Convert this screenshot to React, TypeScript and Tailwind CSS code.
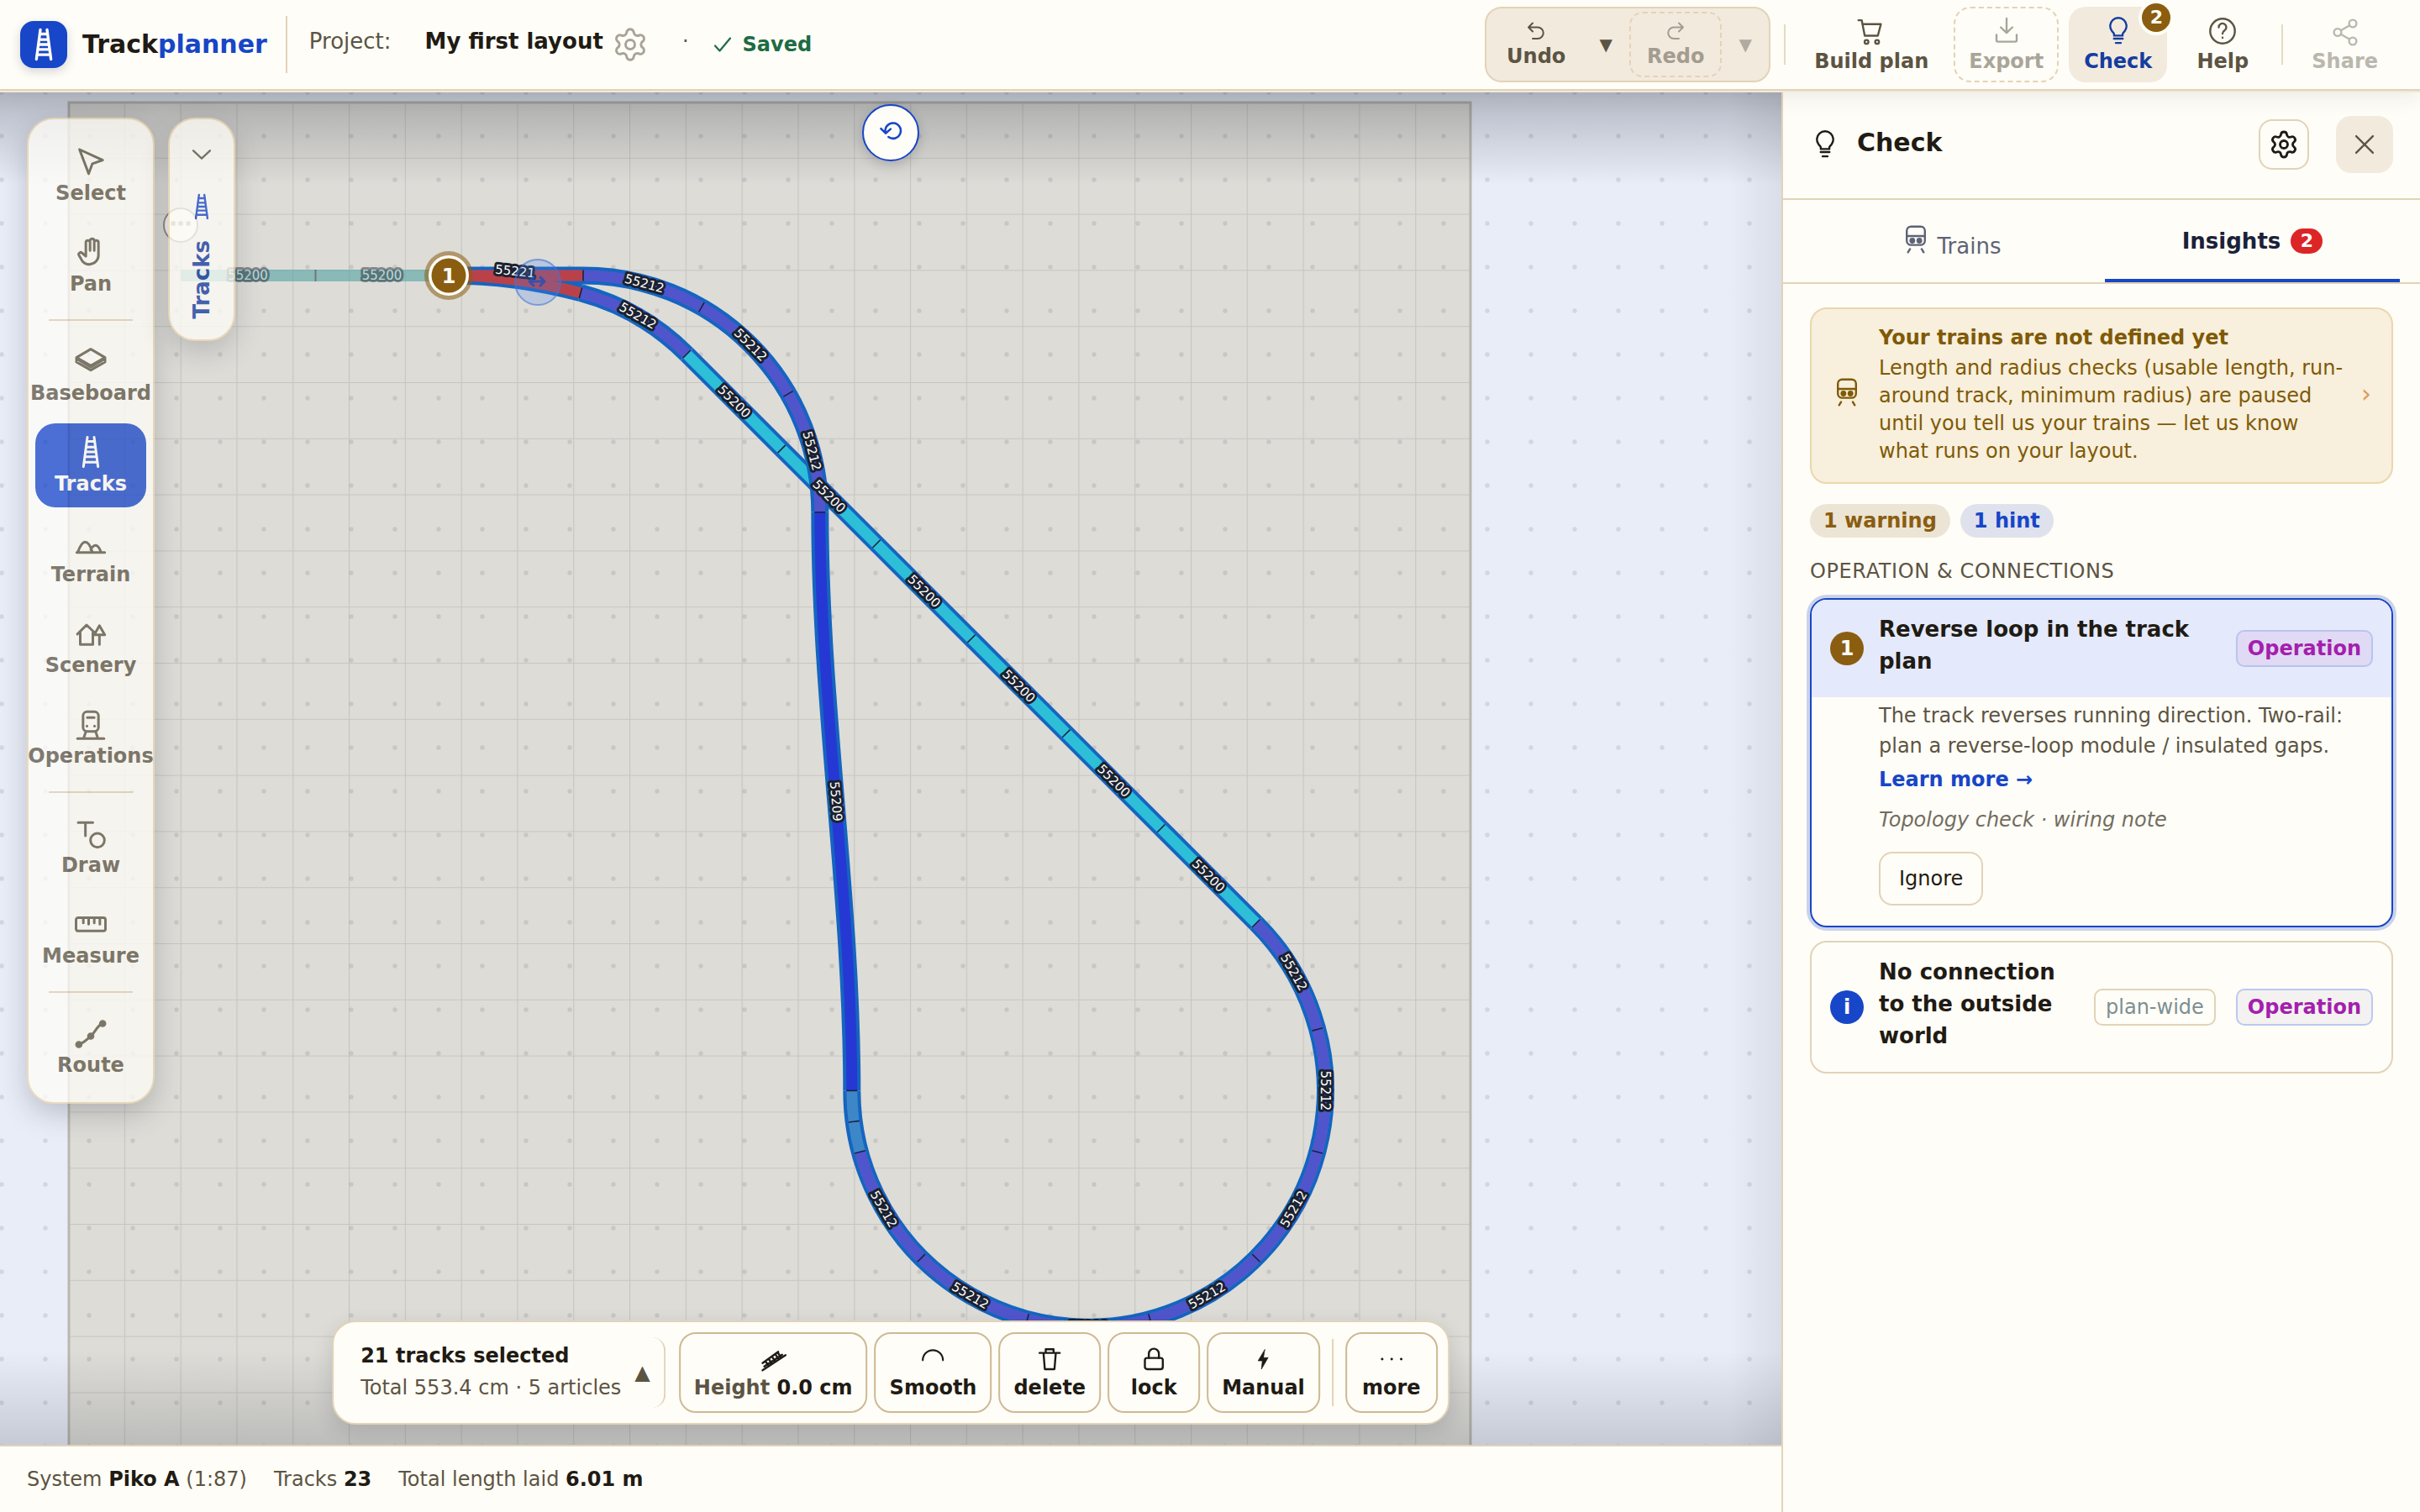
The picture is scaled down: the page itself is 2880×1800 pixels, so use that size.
import type { ReactNode } from "react";
import { Settings } from "lucide-react";

/* ---------- icons ---------- */

type IconProps = { className?: string; width?: number; children: ReactNode };

function Icon({ className = "size-9", width = 1.5, children }: IconProps) {
  return (
    <svg
      viewBox="0 0 24 24"
      className={`${className} shrink-0`}
      fill="none"
      stroke="currentColor"
      strokeWidth={width}
      strokeLinecap="round"
      strokeLinejoin="round"
      aria-hidden="true"
    >
      {children}
    </svg>
  );
}

const rail = (
  <>
    <path d="M9.6 1.5 6.8 22.5M14.4 1.5l2.8 21" />
    <path d="M9.4 4.5h5.2M8.9 8.5h6.2M8.4 12h7.2M8 15.5h8M7.4 19.3h9.2" />
  </>
);

const bulb = (
  <>
    <path d="M8.6 15.6h6.8v-1.2c0-.7 1-1.5 1.7-2.4A6.5 6.5 0 1 0 6.9 12c.7.9 1.7 1.7 1.7 2.4z" />
    <path d="M8.5 18h7M10 21.4h4" />
  </>
);

const train = (
  <>
    <rect x="4.8" y="1.8" width="14.4" height="14.6" rx="3.4" />
    <path d="M4.8 9.3h14.4" />
    <circle cx="9.2" cy="13" r="1.5" fill="currentColor" />
    <circle cx="14.8" cy="13" r="1.5" fill="currentColor" />
    <path d="M7.4 19.6l-1.6 2.6M16.6 19.6l1.6 2.6" />
  </>
);

/* ---------- header ---------- */

type ActionProps = { icon: ReactNode; label: string; className?: string; disabled?: boolean; children?: ReactNode };

function Action({ icon, label, className = "border-transparent", disabled, children }: ActionProps) {
  return (
    <button
      type="button"
      disabled={disabled}
      className={`relative flex h-[90px] flex-col items-center justify-center gap-1 rounded-[20px] border-2 px-4 text-[24px] leading-7 font-bold ${className}`}
    >
      <Icon width={1.6}>{icon}</Icon>
      {label}
      {children}
    </button>
  );
}

function Divider() {
  return <div className="mx-1 h-12 w-0.5 bg-[#e6dac4]" />;
}

function Header() {
  return (
    <header className="relative z-20 flex h-[108px] shrink-0 items-center border-b-2 border-[#e2d3b8] bg-[#fffdf7] px-6 pr-8 shadow-[0_2px_0_#f2e8da,0_8px_24px_rgba(40,35,20,0.08)]">
      <div className="flex items-center gap-[18px]">
        <div className="flex size-14 items-center justify-center rounded-2xl bg-[#1746c8] text-[#fffdf7] shadow-[0_4px_12px_rgba(30,30,60,0.18)]">
          <Icon className="size-10" width={2}>{rail}</Icon>
        </div>
        <h1 className="text-[30px] leading-9 font-bold">
          Track<span className="text-[#1746c8]">planner</span>
        </h1>
      </div>
      <div className="mr-6 ml-[22px] h-[68px] w-0.5 bg-[#e2d3b8]" />
      <div className="flex items-center text-[26px] leading-8">
        <span className="mr-10 ml-0.5 pb-2 text-[#5c5443]">Project:</span>
        <span className="mr-2.5 pb-2 font-bold">My first layout</span>
        <button type="button" aria-label="Project settings" className="text-[#a9a398]">
          <Settings className="size-11" strokeWidth={1.6} />
        </button>
        <span className="mr-7 ml-10 pb-2 text-[24px] text-[#5c5443]">·</span>
        <Icon className="mr-3 size-6 text-[#1d6b45]" width={2.2}>
          <path d="M3 13.5l5.5 6L21 4.5" />
        </Icon>
        <span className="text-[24px] font-bold text-[#1d6b45]">Saved</span>
      </div>
      <div className="ml-auto flex items-center gap-3 text-[#5c5443]">
        <div className="flex h-[90px] items-center gap-1 rounded-[20px] border-2 border-[#e2d3b8] bg-[#f3eade] px-1 text-[24px] leading-7 font-bold">
          <button type="button" className="flex h-[78px] w-[110px] flex-col items-center justify-center gap-1">
            <Icon className="size-6" width={2}>
              <path d="M8 2.5 3 7.5l5 5M3 7.5h11a6.3 6.3 0 0 1 0 13.5H8" />
            </Icon>
            Undo
          </button>
          <button type="button" aria-label="Undo history" className="h-[78px] w-12 text-[20px] font-normal">
            ▼
          </button>
          <button
            type="button"
            disabled
            className="flex h-[78px] w-[110px] flex-col items-center justify-center gap-1 rounded-2xl border-2 border-dashed border-[#e2d3b8] text-[#a39c90]"
          >
            <Icon className="size-6" width={2}>
              <path d="m16 2.5 5 5-5 5M21 7.5H10A6.3 6.3 0 0 0 10 21h6" />
            </Icon>
            Redo
          </button>
          <button type="button" disabled aria-label="Redo history" className="h-[78px] w-12 text-[20px] font-normal text-[#b1aa9e]">
            ▼
          </button>
        </div>
        <Divider />
        <Action
          label="Build plan"
          icon={
            <>
              <path d="M1.8 3.4h2.6l2.4 12.3h10.4l2.4-9.2H5.1" />
              <circle cx="8.2" cy="20.6" r="1.5" />
              <circle cx="16.6" cy="20.6" r="1.5" />
            </>
          }
        />
        <Action
          label="Export"
          disabled
          className="border-dashed border-[#e2d3b8] text-[#a9a59a]"
          icon={<path d="M12 2v11M7.4 9l4.6 4.4L16.6 9M4 15v4.4c0 .6.4 1 1 1h14c.6 0 1-.4 1-1V15" />}
        />
        <Action label="Check" className="border-transparent bg-[#f3eade] text-[#143e9e]" icon={bulb}>
          <span className="absolute -top-2 -right-2 flex h-[38px] w-[38px] items-center justify-center rounded-full border-2 border-[#fffdf7] bg-[#8a5d10] text-[22px] leading-none text-[#fffdf7] ring-2 ring-[#fffdf7]">
            2
          </span>
        </Action>
        <Action
          label="Help"
          className="min-w-[108px] border-transparent"
          icon={
            <>
              <circle cx="12" cy="12" r="9.8" />
              <path d="M9 9a3 3 0 1 1 4.6 2.5c-1 .7-1.6 1.2-1.6 2.5" />
              <path d="M12 17.2v.1" />
            </>
          }
        />
        <Divider />
        <Action
          label="Share"
          disabled
          className="border-transparent text-[#bab7ae]"
          icon={
            <>
              <circle cx="6" cy="13" r="2.9" />
              <circle cx="18" cy="6" r="2.9" />
              <circle cx="18" cy="20" r="2.9" />
              <path d="m8.5 11.5 7-4M8.5 14.5l7 4" />
            </>
          }
        />
      </div>
    </header>
  );
}

/* ---------- track plan ---------- */

const R = 281.8;
const LEN = 112.9;
const START = { x: 817.3, y: 421.6 };
const LOOP = { x: 1295.6, y: 1298.4 };
const TOP = { x: 694, y: 609.8 };

const rad = (d: number) => (d * Math.PI) / 180;
const on = (c: { x: number; y: number }, deg: number) => ({
  x: c.x + R * Math.cos(rad(deg)),
  y: c.y + R * Math.sin(rad(deg)),
});

const OUTLINE = "M534 328H694A281.8 281.8 0 0 1 975.8 609.8";
const BRANCH = "M534 328A606.6 606.6 0 0 1 691 348.7";
const BRANCH_CURVE = "M691 348.7A281.8 281.8 0 0 1 817.3 421.6";
const DIAGONAL = "M817.3 421.6L1494.9 1099.1";
const LOOP_ARC = "M1494.9 1099.1A281.8 281.8 0 1 1 1013.8 1298.4";
const LOOP_MAIN = "M1494.9 1099.1A281.8 281.8 0 1 1 1023.4 1371.3";
const FLEX = "M1013.8 1298.4C1013.8 1068.9 975.8 839.3 975.8 609.8";

type Mark = { x: number; y: number; a: number; text?: string };

const upright = (a: number) => {
  const n = ((a % 360) + 360) % 360;
  return n > 90 && n <= 270 ? n - 180 : n;
};

const loopLabels: Mark[] = [-30, 0, 30, 60, 90, 120, 150].map((d) => ({ ...on(LOOP, d), a: upright(d + 90), text: "55212" }));
const topLabels: Mark[] = [-75, -45, -15].map((d) => ({ ...on(TOP, d), a: upright(d + 90), text: "55212" }));
const diagonalLabels: Mark[] = [0, 1, 2, 3, 4, 5].map((i) => ({
  x: START.x + LEN * (i + 0.5),
  y: START.y + LEN * (i + 0.5),
  a: 45,
  text: "55200",
}));
const labels: Mark[] = [
  ...loopLabels,
  ...topLabels,
  ...diagonalLabels,
  { x: 613, y: 323, a: 6, text: "55221" },
  { x: 759, y: 376, a: 30, text: "55212" },
  { x: 994.8, y: 954, a: 85, text: "55209" },
];

const joints: Mark[] = [
  ...[-45, -15, 15, 45, 75, 105, 135, 165, 172.5, 180].map((d) => ({ ...on(LOOP, d), a: d })),
  ...[-90, -60, -30, 0].map((d) => ({ ...on(TOP, d), a: d })),
  ...[0, 1, 2, 3, 4, 5].map((i) => ({ x: START.x + LEN * i, y: START.y + LEN * i, a: -45 })),
  { x: 691, y: 348.7, a: -75 },
];

function Casing({ d }: { d: string }) {
  return <path d={d} stroke="#1565c0" strokeWidth={21} fill="none" />;
}
function Core({ d, color }: { d: string; color: string }) {
  return <path d={d} stroke={color} strokeWidth={13} fill="none" />;
}
function Label({ m }: { m: Mark }) {
  return (
    <text
      transform={`translate(${m.x} ${m.y}) rotate(${m.a})`}
      textAnchor="middle"
      dominantBaseline="central"
      fontSize={15}
      fill="#fffdf7"
      stroke="#1b2130"
      strokeWidth={6}
      strokeLinejoin="round"
      paintOrder="stroke"
    >
      {m.text}
    </text>
  );
}

function TrackPlan() {
  return (
    <svg className="absolute inset-0 size-full" role="img" aria-label="Track plan">
      <defs>
        <pattern id="dots" x="-24" y="-24" width="52" height="52" patternUnits="userSpaceOnUse">
          <circle cx="26" cy="26" r="2.7" fill="#2b3040" fillOpacity="0.12" />
        </pattern>
        <pattern id="grid" x="81" y="13" width="66.8" height="66.8" patternUnits="userSpaceOnUse">
          <path d="M0 0H66.8M0 0V66.8" stroke="#000" strokeOpacity="0.1" strokeWidth="2.2" fill="none" />
        </pattern>
      </defs>
      <rect x="82" y="14" width="1668" height="1800" fill="#dddcd7" />
      <rect x="82" y="14" width="1668" height="1800" fill="url(#grid)" />
      <rect x="82" y="14" width="1668" height="1800" fill="none" stroke="#b9b7af" strokeWidth="3" />
      <rect width="100%" height="100%" fill="url(#dots)" />
      <g transform="translate(0 -108)">
        <g opacity="0.55">
          <path d="M215 328H534" stroke="#45a0a0" strokeWidth="14" />
          <path d="M375.5 321v14" stroke="#1b2130" strokeWidth="2" />
        </g>
        <g opacity="0.45">
          <Label m={{ x: 295, y: 328, a: 0, text: "55200" }} />
          <Label m={{ x: 454.5, y: 328, a: 0, text: "55200" }} />
        </g>
        <Casing d={BRANCH} />
        <Casing d={BRANCH_CURVE} />
        <Casing d={DIAGONAL} />
        <Core d={DIAGONAL} color="#2dbfd8" />
        <Casing d={LOOP_ARC} />
        <Casing d={FLEX} />
        <Casing d={OUTLINE} />
        <Core d={LOOP_ARC} color="#3d87c8" />
        <Core d={LOOP_MAIN} color="#5055cc" />
        <Core d={FLEX} color="#2638d4" />
        <Core d={OUTLINE} color="#5055cc" />
        <Core d={BRANCH_CURVE} color="#5055cc" />
        <Core d={BRANCH} color="#b9424a" />
        <Core d="M534 328H694" color="#b9424a" />
        {joints.map((m, i) => (
          <path key={i} d="M-6.5 0H6.5" transform={`translate(${m.x} ${m.y}) rotate(${m.a})`} stroke="#1b2140" strokeWidth="1.6" />
        ))}
        {labels.map((m, i) => (
          <Label key={i} m={m} />
        ))}
        <circle cx="640" cy="336" r="27" fill="#4d86f0" fillOpacity="0.24" stroke="#3f74d8" strokeOpacity="0.6" strokeWidth="2" />
        <path
          d="M631 335h17M635 330l-5 5 5 5M643 330l5 5-5 5"
          fill="none"
          stroke="#2450b4"
          strokeOpacity="0.85"
          strokeWidth="3"
          strokeLinecap="round"
          strokeLinejoin="round"
        />
        <circle cx="534" cy="328" r="29" fill="#8a5d10" fillOpacity="0.55" />
        <circle cx="534" cy="328" r="24" fill="#fffdf7" />
        <circle cx="534" cy="328" r="20.5" fill="#8a5d10" />
        <text x="534" y="337" textAnchor="middle" fontSize="24" fontWeight="700" fill="#fffdf7">
          1
        </text>
        <circle cx="215" cy="268" r="20" fill="#fffdf7" fillOpacity="0.7" stroke="#8f8d86" strokeWidth="2" />
        <path d="M206 266h.1M215 266h.1M224 266h.1" stroke="#9d9a90" strokeWidth="5" strokeLinecap="square" />
      </g>
    </svg>
  );
}

/* ---------- tool rail ---------- */

type Tool = { label: string; icon: ReactNode; active?: boolean };

const toolGroups: Tool[][] = [
  [
    { label: "Select", icon: <path d="M4 2.800l16.500 7.600-7.300 2.500-2.700 7.200z" transform="translate(0 .8)" /> },
    {
      label: "Pan",
      icon: (
        <path d="M8.500 12V5.200a1.500 1.500 0 0 1 3 0M11.500 11V4a1.500 1.500 0 0 1 3 0v7M14.500 11V5.200a1.500 1.500 0 0 1 3 0V14a6.500 6.500 0 0 1-6.500 6.800c-2.500 0-4-.8-5.200-2.600L3.700 14.500a1.400 1.400 0 0 1 2.300-1.600l2.500 2.100V12" />
      ),
    },
  ],
  [
    {
      label: "Baseboard",
      icon: (
        <path
          d="M12 4 1.800 10 12 15.800 22.200 10zM1.800 10v3.200L12 19l10.200-5.800V10M2.500 11.200 12 16.700l9.500-5.500"
          transform="translate(0 -.6)"
        />
      ),
    },
    { label: "Tracks", icon: rail, active: true },
    {
      label: "Terrain",
      icon: (
        <path
          d="M2 18h20M2.800 17.600C4.500 13 6.200 10.500 8 10.500s3.800 3 5 6.800M12 16c1.200-2.200 2.200-3 3.500-3s2.700 1.800 3.700 4.600"
          transform="translate(0 1)"
        />
      ),
    },
    {
      label: "Scenery",
      icon: <path d="M2.500 12.500 9 6l6.300 6M4.500 11.500V20h9v-8.500M18.200 20v-7M18.200 6.500 14.500 13h7.500z" />,
    },
    {
      label: "Operations",
      icon: (
        <g transform="translate(0 1.400)">
          <rect x="6.500" y="1.800" width="11" height="14" rx="2.800" />
          <path d="M9.500 6h5M9.300 12v.1M14.700 12v.1M8.500 16 7 20.500M15.500 16l1.500 4.500M2.500 21h19" />
        </g>
      ),
    },
  ],
  [
    {
      label: "Draw",
      icon: (
        <g transform="translate(0 .8)">
          <path d="M3 3.500h10.500M8.200 3.500V13" />
          <circle cx="16.800" cy="16.200" r="5" />
        </g>
      ),
    },
    {
      label: "Measure",
      icon: (
        <>
          <rect x="1.500" y="7.500" width="21" height="9.500" rx="1.500" />
          <path d="M6.700 7.500v3.800M10.500 7.500v4.600M14.500 7.500v3.800M18.500 7.500v4.600" />
        </>
      ),
    },
  ],
  [
    {
      label: "Route",
      icon: (
        <g transform="translate(0 .6)">
          <path d="M3.500 19.500C8 18 9 16 12 13.500S16.500 6 20.300 4.500" />
          <circle cx="3.500" cy="19.500" r="1.700" fill="currentColor" />
          <circle cx="12" cy="13.500" r="1.700" fill="currentColor" />
          <circle cx="20.500" cy="4.500" r="1.700" fill="currentColor" />
        </g>
      ),
    },
  ],
];

function ToolRail() {
  return (
    <nav
      aria-label="Tools"
      className="absolute top-8 left-8 flex w-[152px] flex-col items-center gap-3.5 rounded-[32px] border-2 border-[#ecd6ad] bg-[#fffdf7] py-4 text-[#5c5443] opacity-75 shadow-[0_12px_32px_rgba(20,25,40,0.28)]"
    >
      {toolGroups.map((group, g) => (
        <div key={g} className="flex flex-col items-center gap-3.5">
          {g > 0 && <div className="h-0.5 w-[100px] bg-[#e0cfb0]" />}
          <div className="flex flex-col items-center gap-2">
            {group.map((t) => (
              <button
                key={t.label}
                type="button"
                aria-pressed={!!t.active}
                className={`flex h-[100px] w-[132px] flex-col items-center justify-center gap-1 rounded-[24px] text-[24px] leading-7 font-bold ${
                  t.active ? "bg-[#1746c8] text-[#fffdf7]" : ""
                }`}
              >
                <Icon className="size-10" width={1.8}>{t.icon}</Icon>
                {t.label}
              </button>
            ))}
          </div>
        </div>
      ))}
    </nav>
  );
}

function Flyout() {
  return (
    <button
      type="button"
      className="absolute top-8 left-[200px] flex h-[266px] w-20 flex-col items-center gap-4 rounded-[32px] border-2 border-[#ecd6ad] bg-[#fffdf7] pt-7 text-[#12389e] opacity-75 shadow-[0_12px_32px_rgba(20,25,40,0.24)]"
    >
      <Icon className="size-7 text-[#5c5443]" width={2}>
        <path d="M3.500 8l8.500 8 8.500-8" />
      </Icon>
      <span className="flex flex-col items-center gap-6 pt-4">
        <Icon className="size-8 text-[#1746c8]" width={1.8}>{rail}</Icon>
        <span className="rotate-180 text-[26px] leading-8 font-bold [writing-mode:vertical-rl]">Tracks</span>
      </span>
    </button>
  );
}

/* ---------- selection bar ---------- */

function SelectionButton({ icon, children }: { icon: ReactNode; children: ReactNode }) {
  return (
    <button
      type="button"
      className="flex h-24 min-w-[110px] flex-col items-center justify-center gap-1 rounded-[20px] border-2 border-[#cdb994] px-4 text-[24px] leading-7 font-bold whitespace-nowrap"
    >
      {icon}
      <span>{children}</span>
    </button>
  );
}

function SelectionBar() {
  return (
    <div className="absolute bottom-6 left-1/2 flex -translate-x-1/2 items-center gap-2 rounded-[28px] border-2 border-[#e2d3b8] bg-[#fffdf7] p-3 shadow-[0_8px_24px_rgba(20,25,40,0.14)]">
      <button
        type="button"
        className="mr-2 flex h-[84px] items-center gap-4 rounded-2xl border-r-2 border-[#e2d3b8] pr-4 pl-5 text-left text-[24px] whitespace-nowrap"
      >
        <span className="flex flex-col pb-1">
          <span className="leading-10 font-bold">21 tracks selected</span>
          <span className="leading-9 text-[#5c5443]">Total 553.4 cm · 5 articles</span>
        </span>
        <span className="text-[#5c5443]">▲</span>
      </button>
      <SelectionButton
        icon={
          <Icon className="size-8" width={1.8}>
            <path d="M2.500 15.500 16.500 5.500M2.500 22 23 8.500M5 13.800l3 4.500M8 11.800l3 4.500M11 9.800l3 4.500M14 7.800l3 4.500M16 6l3 4.500M4 18.500 20 8" />
          </Icon>
        }
      >
        <span className="text-[#5c5443]">Height</span> 0.0 cm
      </SelectionButton>
      <SelectionButton
        icon={
          <Icon className="size-8" width={1.6}>
            <path d="M3 13a9 9 0 0 1 18 0" />
          </Icon>
        }
      >
        Smooth
      </SelectionButton>
      <SelectionButton
        icon={
          <Icon className="size-8" width={1.8}>
            <path d="M3 6.500h18M8.500 6.500V3.200h7v3.300M6.500 6.500l1.200 14.500h8.600L17.500 6.500" />
          </Icon>
        }
      >
        delete
      </SelectionButton>
      <SelectionButton
        icon={
          <Icon className="size-8" width={1.8}>
            <rect x="4" y="11" width="16" height="10" rx="2" />
            <path d="M7.500 11V7.200a4.500 4.500 0 0 1 9 0V11" />
          </Icon>
        }
      >
        lock
      </SelectionButton>
      <SelectionButton
        icon={
          <Icon className="size-8" width={0.5}>
            <path d="M13.500 3.500 7.500 13.500h3.800L10.500 21l6-10.300h-4z" fill="currentColor" />
          </Icon>
        }
      >
        Manual
      </SelectionButton>
      <div className="mx-1.5 h-20 w-0.5 bg-[#e2d3b8]" />
      <SelectionButton
        icon={
          <Icon className="size-8" width={2.2}>
            <path d="M3.500 12h.1M12 12h.1M20.500 12h.1" />
          </Icon>
        }
      >
        more
      </SelectionButton>
    </div>
  );
}

function Canvas() {
  return (
    <section className="relative flex-1 overflow-hidden bg-[#e8edf8]" aria-label="Layout canvas">
      <TrackPlan />
      <div className="pointer-events-none absolute inset-y-0 right-0 w-16 bg-linear-to-l from-[#282d3a]/8 to-transparent" />
      <div className="pointer-events-none absolute inset-x-0 bottom-0 h-28 bg-linear-to-t from-[#282d3a]/18 to-transparent" />
      <div className="pointer-events-none absolute inset-x-0 top-0 h-28 bg-linear-to-b from-[#282d3a]/28 to-transparent" />
      <ToolRail />
      <Flyout />
      <button
        type="button"
        aria-label="Rotate view"
        className="absolute top-4 left-1/2 flex size-[68px] -translate-x-1/2 items-center justify-center rounded-full border-2 border-[#1746c8] bg-[#fffdf7] text-[#1746c8] shadow-[0_4px_14px_rgba(20,25,40,0.2)]"
      >
        <Icon className="size-8" width={1.9}>
          <path d="M7.400 12A6.900 6.900 0 1 1 10 15.800M3.300 8.300l4.200 4.200 4.400-3.800" />
        </Icon>
      </button>
      <SelectionBar />
    </section>
  );
}

function StatusBar() {
  return (
    <footer className="flex h-20 shrink-0 items-center gap-8 border-t-2 border-[#e2d3b8] bg-[#fffdf7] px-8 text-[24px] leading-7 text-[#5c5443]">
      <span>
        System <b className="text-[#1f1b14]">Piko A</b> (1:87)
      </span>
      <span>
        Tracks <b className="text-[#1f1b14]">23</b>
      </span>
      <span>
        Total length laid <b className="text-[#1f1b14]">6.01 m</b>
      </span>
    </footer>
  );
}

/* ---------- check panel ---------- */

function Tag({ className, children }: { className: string; children: ReactNode }) {
  return <span className={`shrink-0 rounded-[10px] border-2 px-3 py-1 text-[24px] leading-8 ${className}`}>{children}</span>;
}

function CheckPanel() {
  return (
    <aside className="flex w-[760px] shrink-0 flex-col border-l-2 border-[#e2d3b8] bg-[#fffdf7]" aria-label="Check">
      <div className="flex h-[130px] items-center border-b-2 border-[#e2d3b8] px-8">
        <Icon width={1.6}>{bulb}</Icon>
        <h2 className="ml-5 pb-1 text-[30px] leading-9 font-bold">Check</h2>
        <button
          type="button"
          aria-label="Check settings"
          className="mr-8 ml-auto flex size-[60px] items-center justify-center rounded-2xl border-2 border-[#e2d3b8]"
        >
          <Settings className="size-9" strokeWidth={1.9} />
        </button>
        <button type="button" aria-label="Close" className="flex size-[68px] items-center justify-center rounded-[18px] bg-[#f3eade] text-[#5c5443]">
          <Icon className="size-7" width={2}>
            <path d="M3.500 3.500l17 17M20.500 3.500l-17 17" />
          </Icon>
        </button>
      </div>
      <div role="tablist" className="flex h-[100px] gap-2 border-b-2 border-[#e2d3b8] px-6 text-[26px] leading-8">
        <button type="button" role="tab" aria-selected="false" className="flex flex-1 items-center justify-center gap-2 text-[#5d6377]">
          <span className="pb-1">
            <Icon className="size-9" width={1.6}>{train}</Icon>
          </span>
          <span className="pt-3">Trains</span>
        </button>
        <button
          type="button"
          role="tab"
          aria-selected="true"
          className="flex flex-1 items-center justify-center gap-3 border-b-4 border-[#1746c8] pt-1 font-bold text-[#1b2138]"
        >
          Insights
          <span className="flex h-[30px] w-[38px] items-center justify-center rounded-full bg-[#dc2626] text-[22px] leading-none text-white">2</span>
        </button>
      </div>

      <div className="flex flex-col px-8 pt-7">
        <button
          type="button"
          className="flex items-center rounded-[20px] border-2 border-[#ecd6ad] bg-[#f8efdc] px-6 pt-4 pb-5 text-left text-[24px] text-[#7f5a06]"
        >
          <Icon className="mr-5 mb-1 size-9" width={1.6}>{train}</Icon>
          <span className="flex flex-1 flex-col gap-0.5">
            <strong className="leading-9">Your trains are not defined yet</strong>
            <span className="leading-[33px]">
              Length and radius checks (usable length, run-around track, minimum radius) are paused until you tell us your trains — let us know
              what runs on your layout.
            </span>
          </span>
          <span className="ml-3 text-[30px] leading-8 text-[#e0995a]">›</span>
        </button>

        <div className="mt-6 flex gap-3 text-[24px] leading-10 font-bold">
          <span className="rounded-full bg-[#ece5d5] px-4 text-[#8a5d10]">1 warning</span>
          <span className="rounded-full bg-[#dfe2ec] px-4 text-[#1746c8]">1 hint</span>
        </div>

        <h3 className="mt-6 text-[24px] leading-8 tracking-wide text-[#5c5443] uppercase">Operation &amp; connections</h3>

        <article className="mt-4 overflow-hidden rounded-[20px] border-2 border-[#1746c8] ring-4 ring-[#cbd3ea]">
          <div className="flex items-center bg-[#e4e9fb] px-[22px] pt-4 pb-4">
            <span className="flex size-10 shrink-0 items-center justify-center rounded-full bg-[#8a5d10] text-[24px] font-bold text-[#fffdf7]">1</span>
            <h4 className="mx-[18px] flex-1 pb-2 text-[26px] leading-[38px] font-bold">Reverse loop in the track plan</h4>
            <Tag className="border-[#b9c4ec] bg-[#e1daf4] font-bold text-[#a31fae]">Operation</Tag>
          </div>
          <div className="flex flex-col items-start pt-1 pr-6 pb-6 pl-20 text-[24px] leading-9">
            <p className="text-[#5c5443]">The track reverses running direction. Two-rail: plan a reverse-loop module / insulated gaps.</p>
            <a href="#reverse-loop" className="mt-1 font-bold text-[#1746c8]">
              Learn more →
            </a>
            <p className="mt-3 text-[#736d60] italic">Topology check · wiring note</p>
            <button type="button" className="mt-5 h-16 rounded-2xl border-2 border-[#e2d3b8] px-[22px]">
              Ignore
            </button>
          </div>
        </article>

        <article className="mt-4 rounded-[20px] border-2 border-[#e2d3b8]">
          <div className="flex items-center px-[22px] pt-4 pb-4">
            <span className="flex size-10 shrink-0 items-center justify-center rounded-full bg-[#1746c8] text-[24px] font-bold text-[#fffdf7]">i</span>
            <h4 className="mx-[18px] flex-1 pb-2 text-[26px] leading-[38px] font-bold">No connection to the outside world</h4>
            <Tag className="mr-6 border-[#e2d3b8] text-[#7c8f92]">plan-wide</Tag>
            <Tag className="border-[#bcc8f0] bg-[#f3f2f0] font-bold text-[#a31fae]">Operation</Tag>
          </div>
        </article>
      </div>
    </aside>
  );
}

export default function App() {
  return (
    <div className="flex h-screen flex-col overflow-hidden bg-[#fffdf7] font-['DejaVu_Sans',sans-serif] text-[#1f1b14]">
      <Header />
      <div className="flex min-h-0 flex-1">
        <main className="flex min-w-0 flex-1 flex-col">
          <Canvas />
          <StatusBar />
        </main>
        <CheckPanel />
      </div>
    </div>
  );
}
